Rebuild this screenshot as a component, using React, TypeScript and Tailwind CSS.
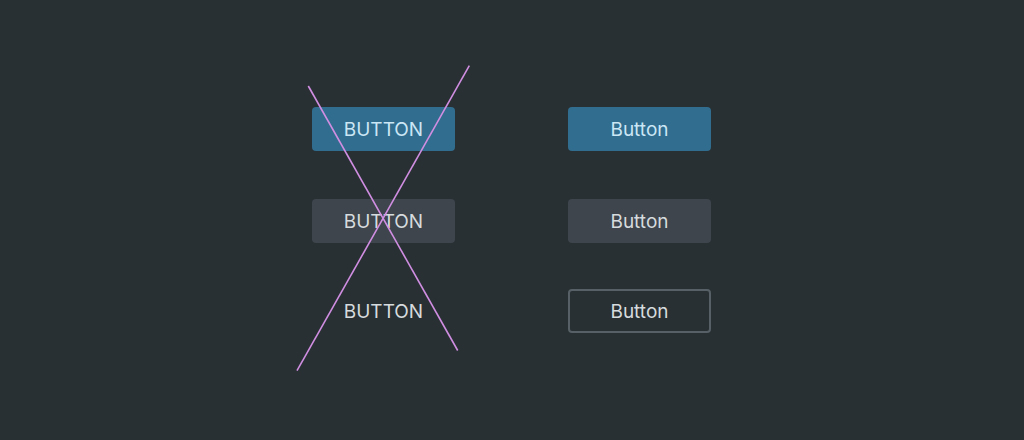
import React from 'react';

const base =
    'flex h-[44px] w-[143px] items-center justify-center rounded-[4px] text-[19px] leading-none';

function Column({ label, outlined }: { label: string; outlined?: boolean }) {
    return (
        <div className="flex flex-col gap-[48px]">
            <button className={`${base} bg-[#316d8e] text-[#cbe6f5]`}>{label}</button>
            <button className={`${base} bg-[#3e454c] text-[#d6dbde]`}>{label}</button>
            <button
                className={`${base} -mt-[2px] text-[#d6dbde] ${
                    outlined ? 'border-2 border-[#566066]' : ''
                }`}
            >
                {label}
            </button>
        </div>
    );
}

export default function App() {
    return (
        <div
            className="relative flex h-[440px] w-[1024px] items-start gap-[113px] bg-[#293033] pl-[312px] pt-[107px]"
            style={{ fontFamily: 'Inter, Roboto, "Liberation Sans", sans-serif' }}
        >
            <Column label="BUTTON" />
            <Column label="Button" outlined />

            {/* "don't" cross over the left column */}
            <svg
                className="pointer-events-none absolute inset-0"
                width="1024"
                height="440"
                viewBox="0 0 1024 440"
            >
                <line x1="308.3" y1="86" x2="457.7" y2="350.5" stroke="#d08ee2" strokeWidth="1.6" />
                <line x1="469.3" y1="65.7" x2="297" y2="370.7" stroke="#d08ee2" strokeWidth="1.6" />
            </svg>
        </div>
    );
}
